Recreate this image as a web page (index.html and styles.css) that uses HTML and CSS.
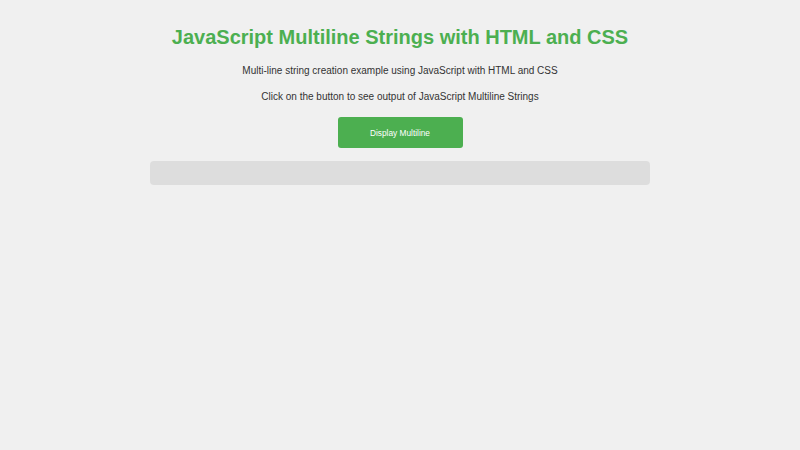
FILE: index.html
```html
<!DOCTYPE html>
<html lang="en">
<head>
    <meta charset="UTF-8">
    <meta name="viewport" content="width=device-width, initial-scale=1.0">
    <title>JavaScript Multiline Strings</title>
    <link rel="stylesheet" href="styles.css">
</head>
<body>
    <div class="container">
        <h1 class="title">JavaScript Multiline Strings with HTML and CSS</h1>
        <p class="text">Multi-line string creation example using JavaScript with HTML and CSS</p>
        <p class="text">Click on the button to see output of JavaScript Multiline Strings</p>
        <button class="btn" onclick="showMultiline()">Display Multiline</button>
        <div id="output" class="output"></div>
    </div>

    <script>
        function showMultiline() {
            let text = `This is line one
This is line two
This is line three`;
            document.getElementById('output').textContent = text;
        }
    </script>
</body>
</html>
```

FILE: styles.css
```css
body {
    font-family: "Liberation Sans", Arial, sans-serif;
    background-color: #f0f0f0;
    margin: 0;
    color: #333;
}
.container {
    display: flex;
    flex-direction: column;
    align-items: center;
    padding-top: 26px;
}
.title {
    color: #4caf50;
    font-size: 20px;
    margin: 0 0 16px;
}
.text {
    font-size: 10px;
    margin: 0 0 15px;
}
.btn {
    width: 125px;
    height: 31px;
    background: #4caf50;
    color: white;
    border: none;
    border-radius: 3px;
    font-family: inherit;
    font-size: 8.3px;
    cursor: pointer;
}
.btn:hover {
    background: #45a049;
}
.output {
    width: 500px;
    min-height: 24px;
    margin-top: 13px;
    background: #ddd;
    border-radius: 4px;
    white-space: pre-line;
    font-size: 10px;
}
```
